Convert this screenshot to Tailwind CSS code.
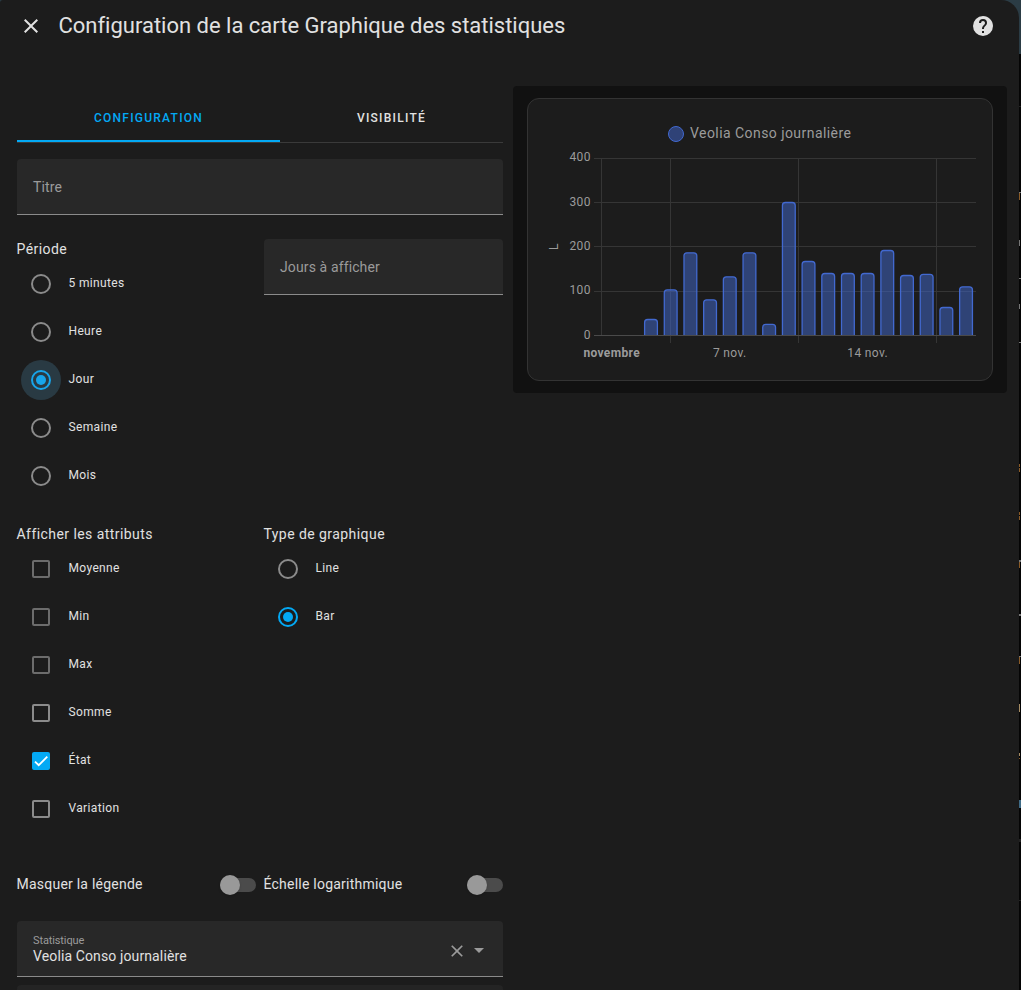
<!DOCTYPE html>
<html lang="fr">
<head>
<meta charset="utf-8">
<title>Configuration de la carte</title>
<script src="https://cdn.jsdelivr.net/npm/@tailwindcss/browser@4"></script>
</head>
<body class="h-[990px] w-[1021px] overflow-hidden bg-[#050505] font-[Roboto,sans-serif] text-[#e1e1e1]">
<div class="relative h-[990px] w-[1021px] overflow-hidden">
  <!-- page behind the dialog -->
  <div class="absolute right-0 top-0 h-[54px] w-10 bg-[#2b3c45]"></div>
  <div class="absolute left-0 top-0 size-2 bg-[#2b3c45]"></div>
  <svg class="absolute right-0 top-0" width="2" height="990" viewBox="0 0 2 990">
    <path fill="#8a5a25" d="M0 193h1v7H0zM0 464h1v3H0zM0 468h1v4H0zM0 512h1v3H0zM0 516h1v4H0zM0 562h1v6H0zM0 657h1v7H0zM0 758h1v1H0z"/>
    <path fill="#777" d="M0 192h2v1H0zM0 240h1v6H0zM0 278h2v1H0zM0 304h1v5H0zM0 342h2v1H0zM0 560h2v2H0zM0 614h2v2H0zM0 656h2v1H0z"/>
    <path fill="#a58b62" d="M0 704h1v8H0zM0 753h1v3H0z"/>
    <path fill="#222" d="M0 106h2v1H0zM0 839h2v3H0zM0 900h2v1H0z"/>
    <path fill="#3f6b86" d="M0 800h2v8H0z"/>
  </svg>

  <main class="relative h-[990px] w-[1019px] rounded-tl-[3px] rounded-tr-[18px] bg-[#1c1c1c]">
    <header class="flex h-[52px] items-center pl-[19px] pr-6">
      <svg class="size-6 shrink-0" viewBox="0 0 24 24" fill="#e1e1e1"><path d="M19,6.41L17.59,5L12,10.59L6.41,5L5,6.41L10.59,12L5,17.59L6.41,19L12,13.41L17.59,19L19,17.59L13.41,12L19,6.41Z"/></svg>
      <h1 class="ml-[15.5px] flex-1 text-[22px] leading-7 tracking-[-0.01px]">Configuration de la carte Graphique des statistiques</h1>
      <svg class="size-6" viewBox="0 0 24 24" fill="#e1e1e1"><path d="M15.07,11.25L14.17,12.17C13.45,12.89 13,13.5 13,15H11V14.5C11,13.39 11.45,12.39 12.17,11.67L13.41,10.41C13.78,10.05 14,9.55 14,9C14,7.89 13.1,7 12,7A2,2 0 0,0 10,9H8A4,4 0 0,1 12,5A4,4 0 0,1 16,9C16,9.88 15.64,10.67 15.07,11.25M13,19H11V17H13M12,2A10,10 0 0,0 2,12A10,10 0 0,0 12,22A10,10 0 0,0 22,12C22,6.47 17.5,2 12,2Z"/></svg>
    </header>

    <div class="flex items-start">
      <section class="ml-[17px] mt-[42px] w-[486px]">
        <nav class="flex h-[49px] border-b border-[#3a3a3a] text-[12px] font-medium uppercase tracking-[1.25px]">
          <div class="flex w-[263px] items-center justify-center border-b-2 border-[#03a9f4] pt-0.5 text-[#03a9f4]">Configuration</div>
          <div class="flex flex-1 items-center justify-center">Visibilité</div>
        </nav>

        <div class="mt-4 flex h-14 items-center rounded-t border-b border-[#8b8b8b] bg-[#282828] px-4 text-sm tracking-[0.15px] text-[#9b9b9b]">Titre</div>

        <div class="mt-6 grid h-[261px] grid-cols-[247px_239px] items-start">
          <div>
            <div class="-ml-[0.5px] h-5 text-sm leading-5 tracking-[0.44px]">Période</div>
            <ul class="text-xs tracking-[0.35px]">
              <li class="flex h-12 items-center"><span class="ml-[14px] mr-[17.5px] mt-0.5 size-5 rounded-full border-2 border-[#8b8b8b]"></span>5 minutes</li>
              <li class="flex h-12 items-center"><span class="ml-[14px] mr-[17.5px] mt-0.5 size-5 rounded-full border-2 border-[#8b8b8b]"></span>Heure</li>
              <li class="flex h-12 items-center"><span class="ml-1 mr-[7.5px] mt-0.5 flex size-10 items-center justify-center rounded-full bg-[#293a43]"><span class="flex size-5 items-center justify-center rounded-full border-2 border-[#18a5ea]"><span class="size-2.5 rounded-full bg-[#18a5ea]"></span></span></span>Jour</li>
              <li class="flex h-12 items-center"><span class="ml-[14px] mr-[17.5px] mt-0.5 size-5 rounded-full border-2 border-[#8b8b8b]"></span>Semaine</li>
              <li class="flex h-12 items-center"><span class="ml-[14px] mr-[17.5px] mt-0.5 size-5 rounded-full border-2 border-[#8b8b8b]"></span>Mois</li>
            </ul>
          </div>
          <div class="flex h-14 items-center rounded-t border-b border-[#8b8b8b] bg-[#282828] px-4 text-sm tracking-[0.12px] text-[#9b9b9b]">Jours à afficher</div>
        </div>

        <div class="mt-6 grid h-[309px] grid-cols-[247px_239px] items-start">
          <div>
            <div class="-ml-[0.5px] h-5 text-sm leading-5 tracking-[0.44px]">Afficher les attributs</div>
            <ul class="text-xs tracking-[0.35px]">
              <li class="flex h-12 items-center"><span class="ml-[15px] mr-[18.5px] mt-0.5 size-[18px] rounded-[2px] border-2 border-[#6c6c6c]"></span>Moyenne</li>
              <li class="flex h-12 items-center"><span class="ml-[15px] mr-[18.5px] mt-0.5 size-[18px] rounded-[2px] border-2 border-[#6c6c6c]"></span>Min</li>
              <li class="flex h-12 items-center"><span class="ml-[15px] mr-[18.5px] mt-0.5 size-[18px] rounded-[2px] border-2 border-[#6c6c6c]"></span>Max</li>
              <li class="flex h-12 items-center"><span class="ml-[15px] mr-[18.5px] mt-0.5 size-[18px] rounded-[2px] border-2 border-[#8b8b8b]"></span>Somme</li>
              <li class="flex h-12 items-center"><span class="ml-[15px] mr-[18.5px] mt-0.5 flex size-[18px] items-center justify-center rounded-[2px] bg-[#03a9f4]"><svg class="size-[14px]" viewBox="0 0 24 24" fill="none" stroke="#fff" stroke-width="3.12"><path d="M1.73,12.91 8.1,19.28 22.79,4.59"/></svg></span>État</li>
              <li class="flex h-12 items-center"><span class="ml-[15px] mr-[18.5px] mt-0.5 size-[18px] rounded-[2px] border-2 border-[#8b8b8b]"></span>Variation</li>
            </ul>
          </div>
          <div>
            <div class="-ml-[0.5px] h-5 text-sm leading-5 tracking-[0.44px]">Type de graphique</div>
            <ul class="text-xs tracking-[0.35px]">
              <li class="flex h-12 items-center"><span class="ml-[14px] mr-[17.5px] mt-0.5 size-5 rounded-full border-2 border-[#8b8b8b]"></span>Line</li>
              <li class="flex h-12 items-center"><span class="ml-[14px] mr-[17.5px] mt-0.5 flex size-5 items-center justify-center rounded-full border-2 border-[#03a9f4]"><span class="size-2.5 rounded-full bg-[#03a9f4]"></span></span>Bar</li>
            </ul>
          </div>
        </div>

        <div class="mt-[23px] grid h-14 grid-cols-[239px_239px] gap-x-2 text-sm tracking-[0.23px]">
          <div class="-ml-[0.5px] flex items-center justify-between"><span>Masquer la légende</span><span class="mt-0.5 flex h-3.5 w-9 items-center rounded-full bg-[#4b4b4b]"><span class="size-5 rounded-full bg-[#999] shadow"></span></span></div>
          <div class="-ml-[0.5px] flex items-center justify-between"><span>Échelle logarithmique</span><span class="mt-0.5 flex h-3.5 w-9 items-center rounded-full bg-[#4b4b4b]"><span class="size-5 rounded-full bg-[#999] shadow"></span></span></div>
        </div>

        <div class="mt-[9px] flex h-14 items-center rounded-t border-b border-[#8b8b8b] bg-[#282828] pl-4 pr-3">
          <div class="flex-1 pt-0.5">
            <div class="text-[11px] leading-[14px] tracking-[-0.12px] text-[#9b9b9b]">Statistique</div>
            <div class="-mt-px mb-px text-sm leading-[18px] tracking-[0.12px]">Veolia Conso journalière</div>
          </div>
          <svg class="mt-1 size-5" viewBox="0 0 24 24" fill="#9b9b9b"><path d="M19,6.41L17.59,5L12,10.59L6.41,5L5,6.41L10.59,12L5,17.59L6.41,19L12,13.41L17.59,19L19,17.59L13.41,12L19,6.41Z"/></svg>
          <svg class="mt-0.5 size-6" viewBox="0 0 24 24" fill="#9b9b9b"><path d="M7,10L12,15L17,10H7Z"/></svg>
        </div>
        <div class="mt-2 h-14 rounded-t bg-[#242424]"></div>
      </section>

      <section class="ml-[10px] mt-[34px] h-[307px] w-[494px] rounded bg-[#111] px-[14px] py-3">
        <div class="h-[283px] w-[466px] overflow-hidden rounded-xl border border-[#333] bg-[#1c1c1c]">
          <svg class="-ml-px -mt-px" width="466" height="283" viewBox="527 98 466 283" font-family="Roboto, sans-serif" fill="#9b9b9b">
            <circle cx="676" cy="134" r="7.5" fill="#2f4277" stroke="#4269d0"/>
            <text id="legend" x="690" y="138" font-size="14" letter-spacing="0.44">Veolia Conso journalière</text>
            <path fill="none" stroke="#353535" d="M594 158.5H976M594 202.5H976M594 246.5H976M594 291.5H976M601.5 158V335M670.5 158V343M798.5 158V343M936.5 158V343"/>
            <path stroke="#4a4a4a" d="M594 335.5H976"/>
            <g id="bars" fill="#4269d0" fill-opacity=".5" stroke="#4269d0" stroke-width="1.3"></g>
            <g font-size="12" text-anchor="end" letter-spacing="0.3">
              <text x="590.7" y="161">400</text><text x="590.7" y="206">300</text><text x="590.7" y="250">200</text><text x="590.7" y="294">100</text><text x="590.7" y="339">0</text>
            </g>
            <text transform="translate(558 250) rotate(-90)" font-size="12">L</text>
            <g font-size="12" text-anchor="middle" letter-spacing="0.35">
              <text x="611.7" y="357" font-weight="700">novembre</text><text x="729.7" y="357">7 nov.</text><text x="867.7" y="357">14 nov.</text>
            </g>
          </svg>
        </div>
      </section>
    </div>
  </main>
</div>
<script>
const tops = [319.5, 289.8, 252.8, 299.8, 276.8, 252.8, 324.3, 202.5, 261.5, 273.5, 273.5, 273.5, 250.5, 275.5, 274.3, 307.5, 286.8];
const group = document.getElementById('bars');
tops.forEach((y, i) => {
  const x = 644.6 + i * 19.69, w = 12.8;
  const p = document.createElementNS('http://www.w3.org/2000/svg', 'path');
  p.setAttribute('d', `M${x} 335V${y + 3}q0 -3 3 -3h${w - 6}q3 0 3 3V335`);
  group.appendChild(p);
});
</script>
</body>
</html>
